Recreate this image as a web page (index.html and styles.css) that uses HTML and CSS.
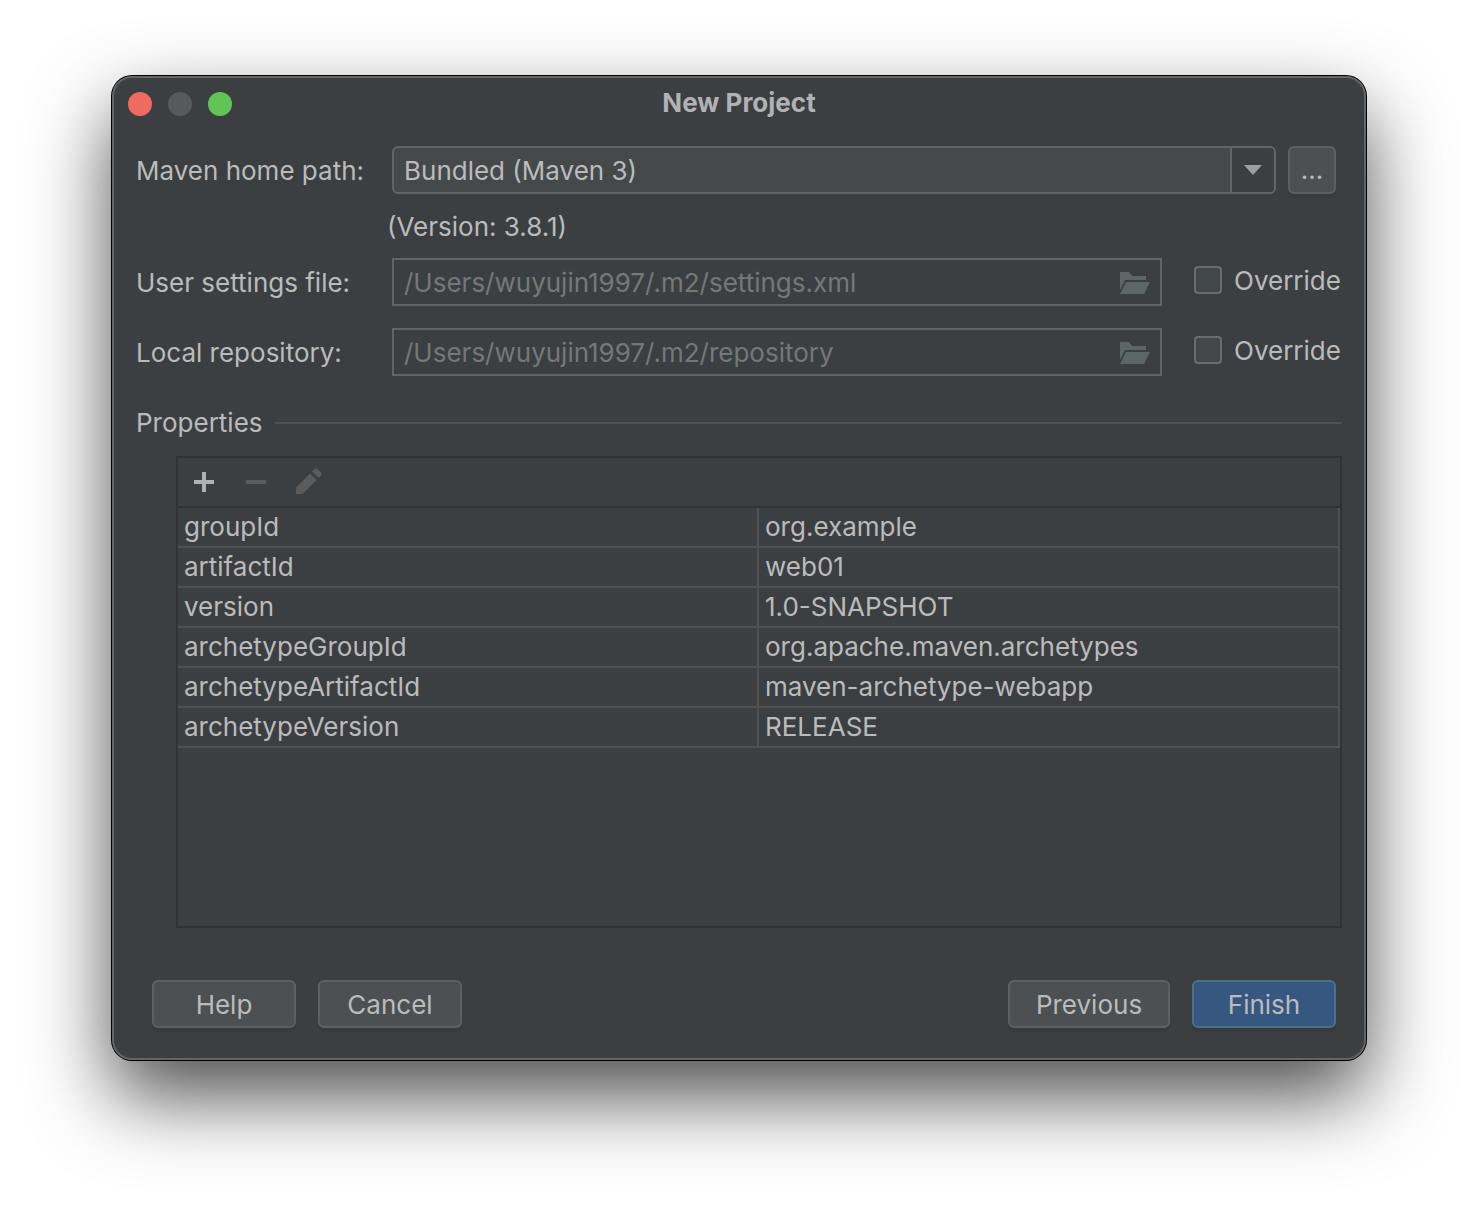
FILE: index.html
```html
<!DOCTYPE html>
<html lang="en">
<head>
<meta charset="utf-8">
<meta name="viewport" content="width=device-width, initial-scale=1">
<title>New Project</title>
<link rel="stylesheet" href="styles.css">
</head>
<body>
<main class="window">
  <header class="titlebar">
    <div class="lights">
      <button class="light light-close" type="button" aria-label="Close"></button>
      <button class="light light-minimize" type="button" aria-label="Minimize" disabled></button>
      <button class="light light-zoom" type="button" aria-label="Zoom"></button>
    </div>
    <h1 class="title">New Project</h1>
  </header>

  <form class="content">
    <div class="row row-home">
      <label class="row-label" for="maven-home">Maven home path:</label>
      <div class="combo">
        <select class="combo-select" id="maven-home">
          <option>Bundled (Maven 3)</option>
        </select>
        <span class="combo-arrow">
          <svg width="18" height="10" viewBox="0 0 18 10" aria-hidden="true"><path d="M0 0h18L9 10z" fill="#9a9da1"/></svg>
        </span>
      </div>
      <button class="button button-browse" type="button" aria-label="Browse">...</button>
    </div>
    <p class="version">(Version: 3.8.1)</p>

    <div class="row">
      <label class="row-label" for="settings">User settings file:</label>
      <div class="field">
        <input class="field-input" id="settings" type="text" value="/Users/wuyujin1997/.m2/settings.xml" disabled>
        <svg class="folder" width="30" height="22" viewBox="0 0 30 22" aria-hidden="true"><path d="M0 0h9l3 4h14v4H5L0 18zM6 10h24l-6 12H0z" fill="#5c6568"/></svg>
      </div>
      <label class="check"><input class="check-box" type="checkbox"><span class="check-text">Override</span></label>
    </div>
    <div class="row">
      <label class="row-label" for="repository">Local repository:</label>
      <div class="field">
        <input class="field-input" id="repository" type="text" value="/Users/wuyujin1997/.m2/repository" disabled>
        <svg class="folder" width="30" height="22" viewBox="0 0 30 22" aria-hidden="true"><path d="M0 0h9l3 4h14v4H5L0 18zM6 10h24l-6 12H0z" fill="#5c6568"/></svg>
      </div>
      <label class="check"><input class="check-box" type="checkbox"><span class="check-text">Override</span></label>
    </div>

    <h2 class="section">Properties</h2>
    <div class="panel">
      <div class="toolbar">
        <button class="tool" type="button" aria-label="Add">
          <svg width="28" height="28" viewBox="0 0 28 28" aria-hidden="true"><path d="M12 4h4v8h8v4h-8v8h-4v-8H4v-4h8z" fill="#afb1b3"/></svg>
        </button>
        <button class="tool" type="button" aria-label="Remove" disabled>
          <svg width="28" height="28" viewBox="0 0 28 28" aria-hidden="true"><path d="M4 12h20v4H4z" fill="#5b5b5b"/></svg>
        </button>
        <button class="tool" type="button" aria-label="Edit" disabled>
          <svg width="28" height="28" viewBox="0 0 28 28" aria-hidden="true"><path d="M16 5.500L22.500 12L8.500 26H2v-6.500zM18 3.500l2.500-2.500q1.500-1.500 3 0l3.500 3.500q1.500 1.500 0 3L24.500 10z" fill="#5b5b5b"/></svg>
        </button>
      </div>
      <table class="properties">
        <colgroup>
          <col class="col-name">
          <col>
        </colgroup>
        <tbody>
          <tr><td>groupId</td><td>org.example</td></tr>
          <tr><td>artifactId</td><td>web01</td></tr>
          <tr><td>version</td><td>1.0-SNAPSHOT</td></tr>
          <tr><td>archetypeGroupId</td><td>org.apache.maven.archetypes</td></tr>
          <tr><td>archetypeArtifactId</td><td>maven-archetype-webapp</td></tr>
          <tr><td>archetypeVersion</td><td>RELEASE</td></tr>
        </tbody>
      </table>
    </div>

    <footer class="actions">
      <button class="button" type="button">Help</button>
      <button class="button" type="button">Cancel</button>
      <button class="button button-previous" type="button">Previous</button>
      <button class="button button-primary" type="submit">Finish</button>
    </footer>
  </form>
</main>
</body>
</html>
```

FILE: styles.css
```css
* {
  box-sizing: border-box;
}

body {
  display: flex;
  min-height: 100vh;
  margin: 0;
  padding: 76px 112px 148px;
  background: #fff;
  color: #bbb;
  font: 26px/32px Inter, "Liberation Sans", sans-serif;
}

button,
input,
select {
  margin: 0;
  color: inherit;
  font: inherit;
}

.window {
  display: flex;
  flex: 1;
  flex-direction: column;
  border: 2px solid #636566;
  border-radius: 20px;
  background: #3c3f41;
  box-shadow: 0 0 0 1px #000, 0 36px 80px rgba(0, 0, 0, 0.7);
}

.titlebar {
  display: grid;
  grid-template-columns: 1fr auto 1fr;
  align-items: center;
  height: 52px;
  padding: 0 14px;
}

.lights {
  display: flex;
  gap: 16px;
}

.light {
  width: 24px;
  height: 24px;
  padding: 0;
  border: 0;
  border-radius: 50%;
}

.light-close {
  background: #ed6b5f;
}

.light-minimize {
  background: #565a5c;
}

.light-zoom {
  background: #61c555;
}

.title {
  margin: 0;
  padding-bottom: 2px;
  color: #b1b2b3;
  font-size: 26px;
  font-weight: 700;
}

.content {
  display: flex;
  flex: 1;
  flex-direction: column;
  padding: 16px 22px 30px;
}

.row {
  display: flex;
  align-items: center;
  margin-bottom: 22px;
}

.row-home {
  margin-bottom: 0;
  padding-right: 6px;
}

.row-label {
  flex: none;
  width: 256px;
  padding-top: 2px;
}

.combo {
  position: relative;
  flex: 1;
  height: 48px;
  margin-right: 12px;
}

.combo-select {
  width: 100%;
  height: 100%;
  padding: 2px 56px 0 10px;
  border: 2px solid #646464;
  border-radius: 6px;
  background: #45494a;
  appearance: none;
}

.combo-arrow {
  position: absolute;
  top: 2px;
  right: 2px;
  bottom: 2px;
  display: flex;
  align-items: center;
  justify-content: center;
  width: 44px;
  border-left: 2px solid #646464;
  border-radius: 0 4px 4px 0;
  background: #3c3f41;
  pointer-events: none;
}

.version {
  margin: 0;
  padding: 17px 0 15px 251px;
}

.field {
  display: flex;
  flex: 1;
  align-items: center;
  height: 48px;
  padding: 2px 10px 0;
  border: 2px solid #646464;
}

.field-input {
  flex: 1;
  min-width: 0;
  padding: 0;
  border: 0;
  background: none;
  color: #777;
}

.folder {
  flex: none;
}

.check {
  display: flex;
  flex: none;
  gap: 12px;
  align-items: center;
  width: 148px;
  margin-left: 32px;
  padding-bottom: 4px;
}

.check-text {
  padding-top: 2px;
}

.check-box {
  flex: none;
  width: 28px;
  height: 28px;
  border: 2px solid #6b6b6b;
  border-radius: 4px;
  background: #43494a;
  appearance: none;
}

.check-box:checked {
  background: #365880;
}

.section {
  display: flex;
  gap: 12px;
  align-items: center;
  margin: 9px 0 17px;
  font-size: 26px;
  font-weight: 400;
}

.section::after {
  flex: 1;
  height: 2px;
  background: #515151;
  content: "";
}

.panel {
  flex: 1;
  margin-left: 40px;
  border: 2px solid #323232;
}

.toolbar {
  display: flex;
  gap: 24px;
  align-items: center;
  height: 50px;
  padding: 0 12px;
  border-bottom: 2px solid #323232;
}

.tool {
  width: 28px;
  height: 28px;
  padding: 0;
  border: 0;
  background: none;
}

.tool svg {
  display: block;
}

.properties {
  width: 100%;
  border-spacing: 0;
  table-layout: fixed;
}

.col-name {
  width: calc(50% + 1px);
}

.properties td {
  height: 40px;
  padding: 0 6px;
  border-right: 2px solid #515151;
  border-bottom: 2px solid #515151;
}

.actions {
  display: flex;
  gap: 22px;
  margin-top: 52px;
  padding: 0 6px 0 16px;
}

.button {
  min-width: 144px;
  height: 48px;
  padding: 2px 24px 0;
  border: 2px solid #5e6060;
  border-radius: 6px;
  background: #4c5052;
  box-shadow: 0 4px 0 rgba(54, 54, 54, 0.5);
}

.button-browse {
  min-width: 48px;
  padding: 0;
}

.button-previous {
  min-width: 162px;
  margin-left: auto;
}

.button-primary {
  border-color: #4c708c;
  background: #365880;
}
```
